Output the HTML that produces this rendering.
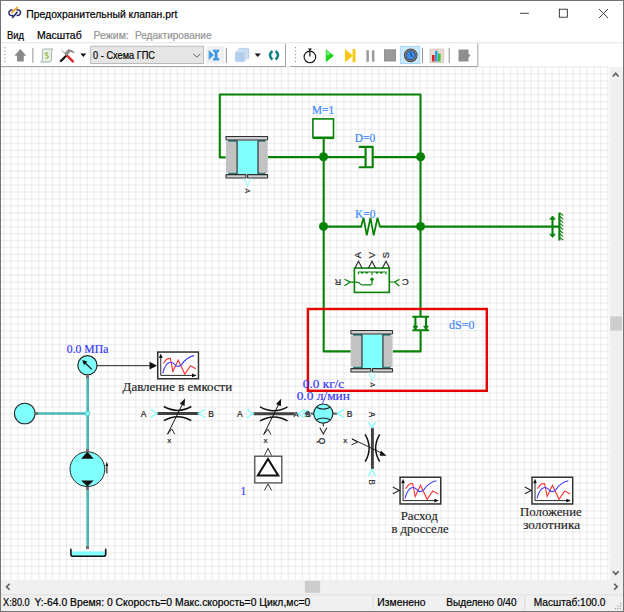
<!DOCTYPE html>
<html><head><meta charset="utf-8"><style>
html,body{margin:0;padding:0;background:#fff;}
body{width:624px;height:612px;overflow:hidden;}
svg{display:block;}

</style></head><body>
<svg width="624" height="612" viewBox="0 0 624 612">
<rect x="0" y="0" width="624" height="612" fill="#ffffff"/>
<g stroke="#000" stroke-opacity="0.055" stroke-width="1.5">
<line x1="3.95" y1="67" x2="3.95" y2="580.5"/>
<line x1="10.89" y1="67" x2="10.89" y2="580.5"/>
<line x1="17.83" y1="67" x2="17.83" y2="580.5"/>
<line x1="24.77" y1="67" x2="24.77" y2="580.5"/>
<line x1="31.71" y1="67" x2="31.71" y2="580.5"/>
<line x1="38.64" y1="67" x2="38.64" y2="580.5"/>
<line x1="45.58" y1="67" x2="45.58" y2="580.5"/>
<line x1="52.52" y1="67" x2="52.52" y2="580.5"/>
<line x1="59.46" y1="67" x2="59.46" y2="580.5"/>
<line x1="66.40" y1="67" x2="66.40" y2="580.5"/>
<line x1="73.34" y1="67" x2="73.34" y2="580.5"/>
<line x1="80.28" y1="67" x2="80.28" y2="580.5"/>
<line x1="87.22" y1="67" x2="87.22" y2="580.5"/>
<line x1="94.16" y1="67" x2="94.16" y2="580.5"/>
<line x1="101.10" y1="67" x2="101.10" y2="580.5"/>
<line x1="108.03" y1="67" x2="108.03" y2="580.5"/>
<line x1="114.97" y1="67" x2="114.97" y2="580.5"/>
<line x1="121.91" y1="67" x2="121.91" y2="580.5"/>
<line x1="128.85" y1="67" x2="128.85" y2="580.5"/>
<line x1="135.79" y1="67" x2="135.79" y2="580.5"/>
<line x1="142.73" y1="67" x2="142.73" y2="580.5"/>
<line x1="149.67" y1="67" x2="149.67" y2="580.5"/>
<line x1="156.61" y1="67" x2="156.61" y2="580.5"/>
<line x1="163.55" y1="67" x2="163.55" y2="580.5"/>
<line x1="170.49" y1="67" x2="170.49" y2="580.5"/>
<line x1="177.42" y1="67" x2="177.42" y2="580.5"/>
<line x1="184.36" y1="67" x2="184.36" y2="580.5"/>
<line x1="191.30" y1="67" x2="191.30" y2="580.5"/>
<line x1="198.24" y1="67" x2="198.24" y2="580.5"/>
<line x1="205.18" y1="67" x2="205.18" y2="580.5"/>
<line x1="212.12" y1="67" x2="212.12" y2="580.5"/>
<line x1="219.06" y1="67" x2="219.06" y2="580.5"/>
<line x1="226.00" y1="67" x2="226.00" y2="580.5"/>
<line x1="232.94" y1="67" x2="232.94" y2="580.5"/>
<line x1="239.88" y1="67" x2="239.88" y2="580.5"/>
<line x1="246.81" y1="67" x2="246.81" y2="580.5"/>
<line x1="253.75" y1="67" x2="253.75" y2="580.5"/>
<line x1="260.69" y1="67" x2="260.69" y2="580.5"/>
<line x1="267.63" y1="67" x2="267.63" y2="580.5"/>
<line x1="274.57" y1="67" x2="274.57" y2="580.5"/>
<line x1="281.51" y1="67" x2="281.51" y2="580.5"/>
<line x1="288.45" y1="67" x2="288.45" y2="580.5"/>
<line x1="295.39" y1="67" x2="295.39" y2="580.5"/>
<line x1="302.33" y1="67" x2="302.33" y2="580.5"/>
<line x1="309.27" y1="67" x2="309.27" y2="580.5"/>
<line x1="316.20" y1="67" x2="316.20" y2="580.5"/>
<line x1="323.14" y1="67" x2="323.14" y2="580.5"/>
<line x1="330.08" y1="67" x2="330.08" y2="580.5"/>
<line x1="337.02" y1="67" x2="337.02" y2="580.5"/>
<line x1="343.96" y1="67" x2="343.96" y2="580.5"/>
<line x1="350.90" y1="67" x2="350.90" y2="580.5"/>
<line x1="357.84" y1="67" x2="357.84" y2="580.5"/>
<line x1="364.78" y1="67" x2="364.78" y2="580.5"/>
<line x1="371.72" y1="67" x2="371.72" y2="580.5"/>
<line x1="378.66" y1="67" x2="378.66" y2="580.5"/>
<line x1="385.60" y1="67" x2="385.60" y2="580.5"/>
<line x1="392.53" y1="67" x2="392.53" y2="580.5"/>
<line x1="399.47" y1="67" x2="399.47" y2="580.5"/>
<line x1="406.41" y1="67" x2="406.41" y2="580.5"/>
<line x1="413.35" y1="67" x2="413.35" y2="580.5"/>
<line x1="420.29" y1="67" x2="420.29" y2="580.5"/>
<line x1="427.23" y1="67" x2="427.23" y2="580.5"/>
<line x1="434.17" y1="67" x2="434.17" y2="580.5"/>
<line x1="441.11" y1="67" x2="441.11" y2="580.5"/>
<line x1="448.05" y1="67" x2="448.05" y2="580.5"/>
<line x1="454.99" y1="67" x2="454.99" y2="580.5"/>
<line x1="461.92" y1="67" x2="461.92" y2="580.5"/>
<line x1="468.86" y1="67" x2="468.86" y2="580.5"/>
<line x1="475.80" y1="67" x2="475.80" y2="580.5"/>
<line x1="482.74" y1="67" x2="482.74" y2="580.5"/>
<line x1="489.68" y1="67" x2="489.68" y2="580.5"/>
<line x1="496.62" y1="67" x2="496.62" y2="580.5"/>
<line x1="503.56" y1="67" x2="503.56" y2="580.5"/>
<line x1="510.50" y1="67" x2="510.50" y2="580.5"/>
<line x1="517.44" y1="67" x2="517.44" y2="580.5"/>
<line x1="524.38" y1="67" x2="524.38" y2="580.5"/>
<line x1="531.31" y1="67" x2="531.31" y2="580.5"/>
<line x1="538.25" y1="67" x2="538.25" y2="580.5"/>
<line x1="545.19" y1="67" x2="545.19" y2="580.5"/>
<line x1="552.13" y1="67" x2="552.13" y2="580.5"/>
<line x1="559.07" y1="67" x2="559.07" y2="580.5"/>
<line x1="566.01" y1="67" x2="566.01" y2="580.5"/>
<line x1="572.95" y1="67" x2="572.95" y2="580.5"/>
<line x1="579.89" y1="67" x2="579.89" y2="580.5"/>
<line x1="586.83" y1="67" x2="586.83" y2="580.5"/>
<line x1="593.77" y1="67" x2="593.77" y2="580.5"/>
<line x1="600.70" y1="67" x2="600.70" y2="580.5"/>
<line x1="607.64" y1="67" x2="607.64" y2="580.5"/>
<line x1="1" y1="67.11" x2="609" y2="67.11"/>
<line x1="1" y1="74.05" x2="609" y2="74.05"/>
<line x1="1" y1="80.99" x2="609" y2="80.99"/>
<line x1="1" y1="87.92" x2="609" y2="87.92"/>
<line x1="1" y1="94.86" x2="609" y2="94.86"/>
<line x1="1" y1="101.79" x2="609" y2="101.79"/>
<line x1="1" y1="108.73" x2="609" y2="108.73"/>
<line x1="1" y1="115.67" x2="609" y2="115.67"/>
<line x1="1" y1="122.60" x2="609" y2="122.60"/>
<line x1="1" y1="129.54" x2="609" y2="129.54"/>
<line x1="1" y1="136.47" x2="609" y2="136.47"/>
<line x1="1" y1="143.41" x2="609" y2="143.41"/>
<line x1="1" y1="150.35" x2="609" y2="150.35"/>
<line x1="1" y1="157.28" x2="609" y2="157.28"/>
<line x1="1" y1="164.22" x2="609" y2="164.22"/>
<line x1="1" y1="171.15" x2="609" y2="171.15"/>
<line x1="1" y1="178.09" x2="609" y2="178.09"/>
<line x1="1" y1="185.03" x2="609" y2="185.03"/>
<line x1="1" y1="191.96" x2="609" y2="191.96"/>
<line x1="1" y1="198.90" x2="609" y2="198.90"/>
<line x1="1" y1="205.83" x2="609" y2="205.83"/>
<line x1="1" y1="212.77" x2="609" y2="212.77"/>
<line x1="1" y1="219.71" x2="609" y2="219.71"/>
<line x1="1" y1="226.64" x2="609" y2="226.64"/>
<line x1="1" y1="233.58" x2="609" y2="233.58"/>
<line x1="1" y1="240.51" x2="609" y2="240.51"/>
<line x1="1" y1="247.45" x2="609" y2="247.45"/>
<line x1="1" y1="254.39" x2="609" y2="254.39"/>
<line x1="1" y1="261.32" x2="609" y2="261.32"/>
<line x1="1" y1="268.26" x2="609" y2="268.26"/>
<line x1="1" y1="275.19" x2="609" y2="275.19"/>
<line x1="1" y1="282.13" x2="609" y2="282.13"/>
<line x1="1" y1="289.07" x2="609" y2="289.07"/>
<line x1="1" y1="296.00" x2="609" y2="296.00"/>
<line x1="1" y1="302.94" x2="609" y2="302.94"/>
<line x1="1" y1="309.87" x2="609" y2="309.87"/>
<line x1="1" y1="316.81" x2="609" y2="316.81"/>
<line x1="1" y1="323.75" x2="609" y2="323.75"/>
<line x1="1" y1="330.68" x2="609" y2="330.68"/>
<line x1="1" y1="337.62" x2="609" y2="337.62"/>
<line x1="1" y1="344.55" x2="609" y2="344.55"/>
<line x1="1" y1="351.49" x2="609" y2="351.49"/>
<line x1="1" y1="358.43" x2="609" y2="358.43"/>
<line x1="1" y1="365.36" x2="609" y2="365.36"/>
<line x1="1" y1="372.30" x2="609" y2="372.30"/>
<line x1="1" y1="379.23" x2="609" y2="379.23"/>
<line x1="1" y1="386.17" x2="609" y2="386.17"/>
<line x1="1" y1="393.11" x2="609" y2="393.11"/>
<line x1="1" y1="400.04" x2="609" y2="400.04"/>
<line x1="1" y1="406.98" x2="609" y2="406.98"/>
<line x1="1" y1="413.91" x2="609" y2="413.91"/>
<line x1="1" y1="420.85" x2="609" y2="420.85"/>
<line x1="1" y1="427.79" x2="609" y2="427.79"/>
<line x1="1" y1="434.72" x2="609" y2="434.72"/>
<line x1="1" y1="441.66" x2="609" y2="441.66"/>
<line x1="1" y1="448.59" x2="609" y2="448.59"/>
<line x1="1" y1="455.53" x2="609" y2="455.53"/>
<line x1="1" y1="462.47" x2="609" y2="462.47"/>
<line x1="1" y1="469.40" x2="609" y2="469.40"/>
<line x1="1" y1="476.34" x2="609" y2="476.34"/>
<line x1="1" y1="483.27" x2="609" y2="483.27"/>
<line x1="1" y1="490.21" x2="609" y2="490.21"/>
<line x1="1" y1="497.15" x2="609" y2="497.15"/>
<line x1="1" y1="504.08" x2="609" y2="504.08"/>
<line x1="1" y1="511.02" x2="609" y2="511.02"/>
<line x1="1" y1="517.95" x2="609" y2="517.95"/>
<line x1="1" y1="524.89" x2="609" y2="524.89"/>
<line x1="1" y1="531.83" x2="609" y2="531.83"/>
<line x1="1" y1="538.76" x2="609" y2="538.76"/>
<line x1="1" y1="545.70" x2="609" y2="545.70"/>
<line x1="1" y1="552.63" x2="609" y2="552.63"/>
<line x1="1" y1="559.57" x2="609" y2="559.57"/>
<line x1="1" y1="566.51" x2="609" y2="566.51"/>
<line x1="1" y1="573.44" x2="609" y2="573.44"/>
<line x1="1" y1="580.38" x2="609" y2="580.38"/>
</g>
<g fill="none" stroke="#2c2870" stroke-width="1.5"><path d="M12.6 10.2 A2.8 2.8 0 1 0 13.2 15.2"/><path d="M16.6 15.2 A2.8 2.8 0 1 0 16.4 10.2"/><path d="M12.3 18 L17.5 11.8" stroke-width="1.7"/></g>
<path d="M11.8 12.6 L17.2 7.5" stroke="#f5a623" stroke-width="1.9" stroke-linecap="round"/>
<text x="26.3" y="17.6" font-size="10.7" fill="#000" stroke="#000" stroke-width="0.2" font-family='"Liberation Sans", sans-serif' text-anchor="start" textLength="151" lengthAdjust="spacingAndGlyphs" >Предохранительный клапан.prt</text>
<line x1="520" y1="13.3" x2="528.8" y2="13.3" stroke="#111" stroke-width="0.8"/>
<rect x="559.3" y="9.2" width="8" height="8" fill="none" stroke="#111" stroke-width="0.8"/>
<path d="M599 9 L608 18 M608 9 L599 18" stroke="#111" stroke-width="0.8"/>
<text x="7" y="38.5" font-size="10.0" fill="#000" stroke="#000" stroke-width="0.2" font-family='"Liberation Sans", sans-serif' text-anchor="start" textLength="17" lengthAdjust="spacingAndGlyphs" >Вид</text>
<text x="36.9" y="38.5" font-size="10.2" fill="#000" stroke="#000" stroke-width="0.2" font-family='"Liberation Sans", sans-serif' text-anchor="start" textLength="44.8" lengthAdjust="spacingAndGlyphs" >Масштаб</text>
<text x="93.6" y="38.5" font-size="10.2" fill="#959595" stroke="#959595" stroke-width="0.2" font-family='"Liberation Sans", sans-serif' text-anchor="start" textLength="35.2" lengthAdjust="spacingAndGlyphs" >Режим:</text>
<text x="135" y="38.5" font-size="10.2" fill="#959595" stroke="#959595" stroke-width="0.2" font-family='"Liberation Sans", sans-serif' text-anchor="start" textLength="76.5" lengthAdjust="spacingAndGlyphs" >Редактирование</text>
<line x1="1" y1="42.8" x2="623" y2="42.8" stroke="#e3e3e3" stroke-width="1"/>
<path d="M285.5 43.5 V66.5 H1" fill="none" stroke="#a3a3a3" stroke-width="1"/>
<path d="M477.8 43.5 V66.5 H290" fill="none" stroke="#a3a3a3" stroke-width="1"/>
<rect x="609.6" y="67" width="13.4" height="513.5" fill="#f0f0f0"/>
<rect x="1" y="580.5" width="622" height="13.8" fill="#f0f0f0"/>
<rect x="610.2" y="316.3" width="11.8" height="14.4" fill="#cdcdcd"/>
<rect x="304.9" y="580.9" width="15.2" height="11.9" fill="#cdcdcd"/>
<g fill="none" stroke="#5a5a5a" stroke-width="1.6"><path d="M612.8 76.5 L615.7 73.2 L618.6 76.5"/><path d="M612.8 571.2 L615.7 574.4 L618.6 571.2"/><path d="M9.6 583.7 L6.6 586.7 L9.6 589.7"/><path d="M614.2 583.7 L617.2 586.7 L614.2 589.7"/></g>
<rect x="1" y="594.3" width="622" height="17" fill="#f0f0f0"/>
<line x1="1" y1="594.8" x2="623" y2="594.8" stroke="#d9d9d9" stroke-width="0.8"/>
<line x1="373.1" y1="596" x2="373.1" y2="610" stroke="#d5d5d5" stroke-width="0.8"/>
<line x1="524.8" y1="596" x2="524.8" y2="610" stroke="#d5d5d5" stroke-width="0.8"/>
<text x="3.1" y="606.3" font-size="10.2" fill="#000" stroke="#000" stroke-width="0.2" font-family='"Liberation Sans", sans-serif' text-anchor="start" textLength="26.6" lengthAdjust="spacingAndGlyphs" >X:80.0</text>
<text x="34.4" y="606.3" font-size="10.2" fill="#000" stroke="#000" stroke-width="0.2" font-family='"Liberation Sans", sans-serif' text-anchor="start" textLength="276" lengthAdjust="spacingAndGlyphs" >Y:-64.0 Время: 0 Скорость=0 Макс.скорость=0 Цикл,мс=0</text>
<text x="377.3" y="606.3" font-size="10.2" fill="#000" stroke="#000" stroke-width="0.2" font-family='"Liberation Sans", sans-serif' text-anchor="start" textLength="48.1" lengthAdjust="spacingAndGlyphs" >Изменено</text>
<text x="446.3" y="606.3" font-size="10.2" fill="#000" stroke="#000" stroke-width="0.2" font-family='"Liberation Sans", sans-serif' text-anchor="start" textLength="70.2" lengthAdjust="spacingAndGlyphs" >Выделено 0/40</text>
<text x="533.8" y="606.3" font-size="10.2" fill="#000" stroke="#000" stroke-width="0.2" font-family='"Liberation Sans", sans-serif' text-anchor="start" textLength="71.7" lengthAdjust="spacingAndGlyphs" >Масштаб:100.0</text>
<rect x="619.9" y="602.9" width="1.2" height="1.2" fill="#a0a0a0"/>
<rect x="617.4" y="605.4" width="1.2" height="1.2" fill="#a0a0a0"/>
<rect x="619.9" y="605.4" width="1.2" height="1.2" fill="#a0a0a0"/>
<rect x="614.9" y="607.9" width="1.2" height="1.2" fill="#a0a0a0"/>
<rect x="617.4" y="607.9" width="1.2" height="1.2" fill="#a0a0a0"/>
<rect x="619.9" y="607.9" width="1.2" height="1.2" fill="#a0a0a0"/>
<rect x="0.5" y="0.5" width="623" height="611" fill="none" stroke="#747474" stroke-width="1"/>
<rect x="4.2" y="47.0" width="1.2" height="1.2" fill="#9a9a9a"/>
<rect x="4.2" y="50.45" width="1.2" height="1.2" fill="#9a9a9a"/>
<rect x="4.2" y="53.9" width="1.2" height="1.2" fill="#9a9a9a"/>
<rect x="4.2" y="57.35" width="1.2" height="1.2" fill="#9a9a9a"/>
<rect x="4.2" y="60.800000000000004" width="1.2" height="1.2" fill="#9a9a9a"/>
<rect x="294.9" y="47.0" width="1.2" height="1.2" fill="#9a9a9a"/>
<rect x="294.9" y="50.45" width="1.2" height="1.2" fill="#9a9a9a"/>
<rect x="294.9" y="53.9" width="1.2" height="1.2" fill="#9a9a9a"/>
<rect x="294.9" y="57.35" width="1.2" height="1.2" fill="#9a9a9a"/>
<rect x="294.9" y="60.800000000000004" width="1.2" height="1.2" fill="#9a9a9a"/>
<path d="M20.4 48.9 L26.3 55.7 L23.8 55.7 L23.8 61.5 L17 61.5 L17 55.7 L14.4 55.7 Z" fill="#8a8a8a"/>
<line x1="32.9" y1="47.8" x2="32.9" y2="62.9" stroke="#6e6e6e" stroke-width="0.75"/>
<line x1="226.4" y1="47.8" x2="226.4" y2="62.9" stroke="#6e6e6e" stroke-width="0.75"/>
<line x1="422.5" y1="47.8" x2="422.5" y2="62.9" stroke="#6e6e6e" stroke-width="0.75"/>
<line x1="449.2" y1="47.8" x2="449.2" y2="62.9" stroke="#6e6e6e" stroke-width="0.75"/>
<path d="M43 49 H53 Q51.6 50 51.6 51.5 V59.8 Q51.4 61.8 49.3 62 H40.6 Q42.4 61 42.4 59.4 V50.6 Q42.4 49.2 43 49 Z" fill="#e9f1e4" stroke="#8aa3a3" stroke-width="0.8"/>
<path d="M48.2 53.2 Q46.2 52.4 45.6 53.8 Q45.4 55 47 55.5 Q48.6 56 48.3 57.3 Q47.6 58.6 45.4 57.8" fill="none" stroke="#8cb02c" stroke-width="1.1"/>
<path d="M61.6 50.2 L67 55.4" stroke="#9a9a9a" stroke-width="1"/>
<path d="M60.9 61 L66.2 55.8" stroke="#111" stroke-width="2.3" stroke-linecap="round"/>
<path d="M67 55.6 L72.9 61.3" stroke="#e0242c" stroke-width="2.5" stroke-linecap="round"/>
<path d="M64.3 53.2 L68.2 49.3 Q71.5 49 74.8 52.3 L73.8 53.3 Q71.5 51.8 70.3 52.1 L66.2 56.1 Z" fill="#8e8e8e"/>
<path d="M80.3 53.6 L86.3 53.6 L83.3 56.9 Z" fill="#111"/>
<path d="M254.7 53.6 L260.7 53.6 L257.7 56.9 Z" fill="#111"/>
<rect x="90.7" y="46.2" width="113" height="17.3" fill="#e5e5e5" stroke="#adadad" stroke-width="0.8"/>
<text x="93.1" y="59.0" font-size="10.2" fill="#000" stroke="#000" stroke-width="0.2" font-family='"Liberation Sans", sans-serif' text-anchor="start" textLength="61.8" lengthAdjust="spacingAndGlyphs" >0 - Схема ГПС</text>
<path d="M193.4 53.8 L196.9 57.3 L200.4 53.8" fill="none" stroke="#444" stroke-width="0.85"/>
<rect x="206.3" y="46" width="18.1" height="17.7" fill="#f0f0f0"/>
<path d="M208.7 50 L213.9 55 L208.7 59.9 Z" fill="#3f9fe4"/>
<path d="M216.1 51 V59.2" stroke="#3a98e0" stroke-width="2.8"/>
<g fill="#3a98e0"><circle cx="214.5" cy="50.7" r="1.5"/><circle cx="217.7" cy="50.7" r="1.5"/><circle cx="214.5" cy="59.3" r="1.5"/><circle cx="217.7" cy="59.3" r="1.5"/></g>
<rect x="238.6" y="48.4" width="10.2" height="10.2" rx="1.2" fill="#c6daf0" stroke="#9dbde2" stroke-width="0.6"/>
<rect x="236.7" y="50" width="10.2" height="10.2" rx="1.2" fill="#bcd4ee" stroke="#e6eef8" stroke-width="0.6"/>
<rect x="234.9" y="51.8" width="10.2" height="10.2" rx="1.2" fill="#b2cdea" stroke="#eef4fb" stroke-width="0.6"/>
<path d="M272.4 51 Q267.6 55.2 272.4 59.4" fill="none" stroke="#138585" stroke-width="2.6"/>
<path d="M275.6 51 Q280.4 55.2 275.6 59.4" fill="none" stroke="#138585" stroke-width="2.6"/>
<circle cx="309.9" cy="56.9" r="5.8" fill="none" stroke="#111" stroke-width="1.1"/>
<path d="M307.8 48.5 H312 L310.6 50 V51.2 H309.2 V50 Z" fill="#111"/>
<path d="M309.9 52 V56.6" stroke="#111" stroke-width="1.2"/>
<path d="M325.8 49.2 L334 55.7 L325.8 62.2 Z" fill="#1ed81e"/>
<path d="M326.6 50.8 L330.5 53.9 L326.6 55.5 Z" fill="#7cf07c"/>
<path d="M345 49.1 L352.9 55.7 L345 62.2 Z" fill="#fcc60c"/>
<rect x="352.6" y="49.1" width="2.8" height="13.1" fill="#fcc60c"/>
<path d="M366.3 50.5 L368.8 50 L369 61.5 L366.5 62 Z M371.8 50.5 L374.3 50 L374.5 61.5 L372 62 Z" fill="#9a9a9a"/>
<rect x="384.4" y="49.8" width="11.2" height="11.2" fill="#9a9a9a" stroke="#858585" stroke-width="0.8"/>
<rect x="400.3" y="46.3" width="19.6" height="17.2" fill="#cce8ff" stroke="#99d1ff" stroke-width="0.8"/>
<circle cx="410.7" cy="55.3" r="6.3" fill="#9a9a9a" stroke="#4a4a4a" stroke-width="1.1"/>
<circle cx="410.7" cy="55.3" r="4.6" fill="#3a8cf0" stroke="#333" stroke-width="0.8"/>
<path d="M410.6 52.4 Q410.6 55.4 412.2 56.8" fill="none" stroke="#1a2a50" stroke-width="0.9"/>
<rect x="430" y="49" width="13.8" height="13.6" fill="#eadbd0" stroke="#c8b8a8" stroke-width="0.6"/>
<rect x="432" y="55" width="2.6" height="6.5" fill="#e02020"/>
<rect x="435" y="50.8" width="2.6" height="10.7" fill="#2aa0e0"/>
<rect x="438" y="53.5" width="2.6" height="8" fill="#40c040"/>
<path d="M458.5 49.5 H468.5 V53.5 L470.5 55.5 L468.5 57.5 V61.5 H458.5 Z" fill="#8e8e8e"/>
<g fill="none" stroke="#078207" stroke-width="2.1" stroke-linejoin="round">
<path d="M225.6 157.4 H219.8 V94.5 H420.5 V316.8"/>
<path d="M420.6 330.5 V351.4 H392.8"/>
<path d="M268 157.1 H365.6 M372.7 157.1 H420.5"/>
<path d="M323.7 138.4 V351.4 H350.6"/>
<path d="M323.6 226.6 H362 M379.4 226.6 H559.4"/>
<path d="M361.2 226.6 L363.6 217.8 L366.8 235.4 L370.5 217.8 L373.7 235.4 L377.5 217.8 L379.9 226.6" stroke-width="1.75" stroke-linejoin="miter"/>
<path d="M358.8 146.9 H372.7 V167.3 H358.8 M365.6 146.9 V167.3"/>
<path d="M412.3 316.8 H429.1 M412.3 330.3 H429.1 M415.4 317 V328.5 M426 317 V328.5"/>
<path d="M559.4 212.7 V240.4 M552.5 218 V235.5"/>
</g>
<path d="M412.9 326 L415.4 330.2 L417.9 326 Z M423.5 326 L426 330.2 L428.5 326 Z" fill="#078207" stroke="#078207" stroke-width="0.6"/>
<path d="M549.8 219.2 L552.5 216 L555.2 219.2 Z M549.8 234.2 L552.5 237.4 L555.2 234.2 Z" fill="#078207" stroke="#078207" stroke-width="0.8"/>
<path d="M559.4 212.60 L563.2 215.60 M559.4 216.10 L563.2 219.10 M559.4 219.60 L563.2 222.60 M559.4 223.10 L563.2 226.10 M559.4 226.60 L563.2 229.60 M559.4 230.10 L563.2 233.10 M559.4 233.60 L563.2 236.60 M559.4 237.10 L563.2 240.10 " stroke="#078207" stroke-width="1.2"/>
<rect x="312.9" y="118.9" width="20.6" height="18.6" fill="#fff" stroke="#078207" stroke-width="1.6"/>
<line x1="312.9" y1="137.9" x2="333.9" y2="137.9" stroke="#078207" stroke-width="2.4"/>
<circle cx="323.5" cy="156.7" r="4.5" fill="#078207"/>
<circle cx="420.6" cy="156.7" r="4.5" fill="#078207"/>
<circle cx="323.5" cy="226.4" r="4.5" fill="#078207"/>
<circle cx="420.6" cy="226.4" r="4.5" fill="#078207"/>
<rect x="354.4" y="268.1" width="34.9" height="24.3" fill="#fff" stroke="#078207" stroke-width="1.6"/>
<path d="M358.4 274.6 V272 H386 V274.4 M361 272 Q362.2 274.6 363.4 272 M365.4 272 Q366.6 274.6 367.8 272 M372 272 V275.5 M375.8 272 Q377 274.6 378.2 272 M380 272 Q381.2 274.6 382.4 272" fill="none" stroke="#078207" stroke-width="1.1"/>
<path d="M344.5 279.3 L350.4 282.1 L344.5 285.8 M350.4 282.1 H357 Q359 282.1 360.8 284.4 Q361.3 284.9 362.5 284.9 H370.5 Q372 284.9 372 283.4 V279" fill="none" stroke="#078207" stroke-width="1.2"/>
<circle cx="372" cy="279.2" r="1.7" fill="#078207"/>
<path d="M399.4 279.4 L394.6 282 L399.4 286 M389.3 282 H394.6" fill="none" stroke="#078207" stroke-width="1.2"/>
<path d="M355.0 268 L358.5 261.2 L362.0 268" fill="none" stroke="#2a2a2a" stroke-width="1.1"/>
<path d="M368.5 268 L372.0 261.2 L375.5 268" fill="none" stroke="#2a2a2a" stroke-width="1.1"/>
<path d="M382.5 268 L386.0 261.2 L389.5 268" fill="none" stroke="#2a2a2a" stroke-width="1.1"/>
<text x="358.5" y="255.2" font-size="9.3" fill="#2a2a2a" stroke="#2a2a2a" stroke-width="0.2" font-family='"Liberation Sans"' text-anchor="middle" dominant-baseline="central" transform="rotate(-90 358.5 255.2)">A</text>
<text x="372.0" y="255.2" font-size="9.3" fill="#2a2a2a" stroke="#2a2a2a" stroke-width="0.2" font-family='"Liberation Sans"' text-anchor="middle" dominant-baseline="central" transform="rotate(-90 372.0 255.2)">V</text>
<text x="386.0" y="255.2" font-size="9.3" fill="#2a2a2a" stroke="#2a2a2a" stroke-width="0.2" font-family='"Liberation Sans"' text-anchor="middle" dominant-baseline="central" transform="rotate(-90 386.0 255.2)">S</text>
<text x="338" y="281.6" font-size="9.3" fill="#2a2a2a" stroke="#2a2a2a" stroke-width="0.2" font-family='"Liberation Sans"' text-anchor="middle" dominant-baseline="central" transform="rotate(180 338 281.6)">R</text>
<text x="405.3" y="281.6" font-size="9.3" fill="#2a2a2a" stroke="#2a2a2a" stroke-width="0.2" font-family='"Liberation Sans"' text-anchor="middle" dominant-baseline="central" transform="rotate(180 405.3 281.6)">C</text>
<g transform="translate(225.6,136.1)"><rect x="11.5" y="4.4" width="20.9" height="33.6" fill="#80ffff"/><rect x="0.4" y="5.4" width="11.1" height="31.4" fill="#c2c2c2"/><rect x="32.4" y="5.4" width="9.6" height="31.4" fill="#c2c2c2"/><path d="M2.5 3.8 H11.5 V5.6 H2.5 Z M32.4 3.8 H40 V5.6 H32.4 Z M2.5 36.6 H11.5 V38.4 H2.5 Z M32.4 36.6 H40 V38.4 H32.4 Z" fill="#2d7d7d"/><path d="M11.5 4.4 V37.6 M32.4 4.4 V37.6" stroke="#262626" stroke-width="1.1"/><rect x="0.4" y="0.4" width="41.6" height="3.4" rx="0.3" fill="#d0d0d0" stroke="#2e2e2e" stroke-width="1.05"/><rect x="0.4" y="38.5" width="20" height="3.4" rx="0.3" fill="#d0d0d0" stroke="#2e2e2e" stroke-width="1.05"/><rect x="22" y="38.5" width="20" height="3.4" rx="0.3" fill="#d0d0d0" stroke="#2e2e2e" stroke-width="1.05"/><path d="M18.3 42.2 L21.8 50.4 L25.3 42.2" fill="none" stroke="#80ffff" stroke-width="0.9"/><text x="21.6" y="54.6" font-size="7.5" fill="#222" font-family='"Liberation Sans"' text-anchor="middle" dominant-baseline="central" transform="rotate(90 21.6 54.6)">A</text></g>
<g transform="translate(350.5,330.1)"><rect x="11.5" y="4.4" width="20.9" height="33.6" fill="#80ffff"/><rect x="0.4" y="5.4" width="11.1" height="31.4" fill="#c2c2c2"/><rect x="32.4" y="5.4" width="9.6" height="31.4" fill="#c2c2c2"/><path d="M2.5 3.8 H11.5 V5.6 H2.5 Z M32.4 3.8 H40 V5.6 H32.4 Z M2.5 36.6 H11.5 V38.4 H2.5 Z M32.4 36.6 H40 V38.4 H32.4 Z" fill="#2d7d7d"/><path d="M11.5 4.4 V37.6 M32.4 4.4 V37.6" stroke="#262626" stroke-width="1.1"/><rect x="0.4" y="0.4" width="41.6" height="3.4" rx="0.3" fill="#d0d0d0" stroke="#2e2e2e" stroke-width="1.05"/><rect x="0.4" y="38.5" width="20" height="3.4" rx="0.3" fill="#d0d0d0" stroke="#2e2e2e" stroke-width="1.05"/><rect x="22" y="38.5" width="20" height="3.4" rx="0.3" fill="#d0d0d0" stroke="#2e2e2e" stroke-width="1.05"/><path d="M18.3 42.2 L21.8 50.4 L25.3 42.2" fill="none" stroke="#80ffff" stroke-width="0.9"/><text x="21.6" y="54.6" font-size="7.5" fill="#222" font-family='"Liberation Sans"' text-anchor="middle" dominant-baseline="central" transform="rotate(90 21.6 54.6)">A</text></g>
<text x="323.1" y="114.2" font-size="12.4" fill="#3b87ff" stroke="#3b87ff" stroke-width="0.18" font-family='"Liberation Serif", serif' text-anchor="middle" textLength="22" lengthAdjust="spacingAndGlyphs" >M=1</text>
<text x="365.0" y="141.7" font-size="12.4" fill="#3b87ff" stroke="#3b87ff" stroke-width="0.18" font-family='"Liberation Serif", serif' text-anchor="middle" textLength="20.4" lengthAdjust="spacingAndGlyphs" >D=0</text>
<text x="365.3" y="218.0" font-size="12.4" fill="#3b87ff" stroke="#3b87ff" stroke-width="0.18" font-family='"Liberation Serif", serif' text-anchor="middle" textLength="20.5" lengthAdjust="spacingAndGlyphs" >K=0</text>
<text x="461.8" y="329.2" font-size="12.4" fill="#3b87ff" stroke="#3b87ff" stroke-width="0.18" font-family='"Liberation Serif", serif' text-anchor="middle" textLength="25.5" lengthAdjust="spacingAndGlyphs" >dS=0</text>
<rect x="307.9" y="309" width="178.9" height="81.8" fill="none" stroke="#e60000" stroke-width="2.4"/>
<g fill="none" stroke="#4db7b7" stroke-width="2.6">
<path d="M37 413.5 H87.7 M87.7 378 V547.5"/>
</g>
<circle cx="87.45" cy="365.3" r="9.6" fill="#80ffff" stroke="#2a2a2a" stroke-width="1.2"/>
<path d="M91.8 369.4 L84.5 362.2" stroke="#111" stroke-width="1.2"/>
<path d="M82.3 360 L87.4 361.5 L83.8 365.1 Z" fill="#111"/>
<rect x="86" y="375.3" width="3" height="3" fill="#707070"/>
<path d="M97 365.7 H151" stroke="#222" stroke-width="1"/>
<path d="M157 365.7 L149.5 361.8 L149.5 369.6 Z" fill="#111"/>
<text x="87.6" y="352.5" font-size="11.7" fill="#3434ff" stroke="#3434ff" stroke-width="0.16" font-family='"Liberation Serif", serif' text-anchor="middle" textLength="41.6" lengthAdjust="spacingAndGlyphs" >0.0 МПа</text>
<g transform="translate(157,351.3)"><rect x="0.75" y="0.75" width="40.7" height="26.7" fill="#fff" stroke="#333" stroke-width="1.5"/><polyline points="6.2,12.2 9.7,7.8 13.3,6.9 15.9,20.1 21.2,8.7 27.8,22.8 33.5,14.4 38.8,17.5" fill="none" stroke="#ff3030" stroke-width="1.1"/><path d="M5.8 22 Q8 12 13.3 11 Q16 10.9 18.6 14 Q21.5 16.5 24.7 13.1 Q30 5.5 37.1 4.3" fill="none" stroke="#3a3aff" stroke-width="1.1"/><path d="M3.75 24.1 V4.5 M3.75 24.1 H37" fill="none" stroke="#111" stroke-width="0.9"/><path d="M3.75 2.3 L1.9 6.8 L5.6 6.8 Z M39.6 24.1 L35 22.2 L35 26 Z" fill="#111"/></g>
<text x="177.4" y="391.2" font-size="12.2" fill="#222" stroke="#222" stroke-width="0.16" font-family='"Liberation Serif", serif' text-anchor="middle" textLength="109.6" lengthAdjust="spacingAndGlyphs" >Давление в емкости</text>
<circle cx="24.7" cy="413.5" r="10.3" fill="#80ffff" stroke="#2a2a2a" stroke-width="1.1"/>
<rect x="35" y="412" width="3" height="3" fill="#707070"/>
<circle cx="87.5" cy="413.5" r="2.4" fill="#80ffff" stroke="#4db7b7" stroke-width="0.8"/>
<circle cx="87.4" cy="469.2" r="17.4" fill="#80ffff" stroke="#2a2a2a" stroke-width="1"/>
<path d="M87.4 451.7 L93.7 458.7 L81.1 458.7 Z M81.1 480.4 L93.7 480.4 L87.4 486.6 Z" fill="#111"/>
<rect x="86" y="449" width="3" height="2.5" fill="#707070"/>
<rect x="86" y="487" width="3" height="3" fill="#707070"/>
<path d="M106.8 473.6 V464" stroke="#505050" stroke-width="1.5"/>
<path d="M106.8 461.8 L105.4 466 L108.2 466 Z" fill="#111"/>
<rect x="86" y="546" width="3" height="3" fill="#707070"/>
<rect x="71.2" y="551.4" width="34" height="4.6" fill="#80ffff"/>
<path d="M70.9 549.2 V554.2 Q70.9 556.2 72.9 556.2 H103.7 Q105.7 556.2 105.7 554.2 V549.2" fill="none" stroke="#111" stroke-width="1.6" stroke-linecap="round"/>
<path d="M157.4 413.5 H198.5" stroke="#404040" stroke-width="2.9"/><path d="M163.8 406.5 Q178 414.3 191.3 406.5 M163.8 420.6 Q178 412.7 191.3 420.6" fill="none" stroke="#111" stroke-width="1.45"/><path d="M167.5 434.2 L183.5 402.0" stroke="#111" stroke-width="1"/><path d="M185 398.5 L179.8 403.7 L184.6 405.9 Z" fill="#111"/><path d="M167.5 434.2 L171.8 428.9 L174.7 434.2" fill="none" stroke="#111" stroke-width="0.9"/><path d="M150.5 409.5 L157 413.5 L150.5 417.5 M205 409.5 L198.5 413.5 L205 417.5" fill="none" stroke="#80ffff" stroke-width="1.3"/>
<text x="143.7" y="417.0" font-size="8.5" fill="#222" stroke="#222" stroke-width="0.2" font-family='"Liberation Sans", sans-serif' text-anchor="middle"  >A</text>
<text x="211" y="417.0" font-size="8.5" fill="#222" stroke="#222" stroke-width="0.2" font-family='"Liberation Sans", sans-serif' text-anchor="middle"  >B</text>
<text x="169.3" y="442.5" font-size="8" fill="#222" stroke="#222" stroke-width="0.2" font-family='"Liberation Sans", sans-serif' text-anchor="middle"  >x</text>
<path d="M253.6 413.8 H294.7" stroke="#404040" stroke-width="2.9"/><path d="M260.0 406.8 Q274.2 414.6 287.5 406.8 M260.0 420.90000000000003 Q274.2 413.0 287.5 420.90000000000003" fill="none" stroke="#111" stroke-width="1.45"/><path d="M263.7 434.5 L279.7 402.3" stroke="#111" stroke-width="1"/><path d="M281.2 398.8 L276.0 404.0 L280.8 406.2 Z" fill="#111"/><path d="M263.7 434.5 L268.0 429.2 L270.9 434.5" fill="none" stroke="#111" stroke-width="0.9"/><path d="M246.7 409.8 L253.2 413.8 L246.7 417.8 M304.5 409.8 L298.0 413.8 L304.5 417.8" fill="none" stroke="#80ffff" stroke-width="1.3"/>
<text x="239.89999999999998" y="417.3" font-size="8.5" fill="#222" stroke="#222" stroke-width="0.2" font-family='"Liberation Sans", sans-serif' text-anchor="middle"  >A</text>
<text x="307.2" y="417.3" font-size="8.5" fill="#222" stroke="#222" stroke-width="0.2" font-family='"Liberation Sans", sans-serif' text-anchor="middle"  >B</text>
<text x="265.5" y="442.8" font-size="8" fill="#222" stroke="#222" stroke-width="0.2" font-family='"Liberation Sans", sans-serif' text-anchor="middle"  >x</text>
<path d="M311 413.6 H315 M332 413.6 H337.5" stroke="#6a6a6a" stroke-width="2.4"/>
<circle cx="323.3" cy="413.6" r="9.6" fill="#80ffff" stroke="#2a2a2a" stroke-width="1.2"/>
<path d="M316.3 407.3 Q323.3 411 330.3 407.3 M316.3 419.8 Q323.3 416.1 330.3 419.8" fill="none" stroke="#222" stroke-width="1.1"/>
<path d="M322.3 403.9 L324.6 398.3" stroke="#3434ff" stroke-width="0.8"/>
<path d="M323.3 423.2 V426.3 M319.8 427.8 L323.3 434 L326.8 427.8" fill="none" stroke="#222" stroke-width="1.1"/>
<path d="M307.6 409.8 L303.3 413.6 L307.6 417.4 M343.7 409.6 L337.5 413.6 L343.7 417.6" fill="none" stroke="#80ffff" stroke-width="1.3"/>
<text x="296.2" y="416.6" font-size="7.8" fill="#222" stroke="#222" stroke-width="0.2" font-family='"Liberation Sans", sans-serif' text-anchor="middle"  >A</text>
<text x="308.3" y="416.6" font-size="7.8" fill="#222" stroke="#222" stroke-width="0.2" font-family='"Liberation Sans", sans-serif' text-anchor="middle"  >B</text>
<text x="349.6" y="417.3" font-size="8.5" fill="#222" stroke="#222" stroke-width="0.2" font-family='"Liberation Sans", sans-serif' text-anchor="middle"  >B</text>
<text x="321.8" y="441" font-size="8.2" fill="#222" stroke="#222" stroke-width="0.2" font-family='"Liberation Sans"' text-anchor="middle" dominant-baseline="central" transform="rotate(90 321.8 441)">Q</text>
<text x="323.5" y="388.4" font-size="12" fill="#3434ff" stroke="#3434ff" stroke-width="0.16" font-family='"Liberation Serif", serif' text-anchor="middle" textLength="41.4" lengthAdjust="spacingAndGlyphs" >0.0 кг/с</text>
<text x="323.3" y="400.4" font-size="12" fill="#3434ff" stroke="#3434ff" stroke-width="0.16" font-family='"Liberation Serif", serif' text-anchor="middle" textLength="53.3" lengthAdjust="spacingAndGlyphs" >0.0 л/мин</text>
<path d="M372.4 427.8 V469.0" stroke="#404040" stroke-width="2.9"/>
<path d="M365.09999999999997 434.3 Q373.2 448.0 365.09999999999997 461.7 M379.7 434.3 Q371.59999999999997 448.0 379.7 461.7" fill="none" stroke="#111" stroke-width="1.45"/>
<path d="M351.9 438.8 L383.5 454" stroke="#111" stroke-width="0.9"/>
<path d="M386.5 455.7 L380.8 450.6 L379.7 455.8 Z" fill="#111"/>
<path d="M351.9 438.8 L357.5 442.2 L351.5 444.8" fill="none" stroke="#111" stroke-width="0.9"/>
<path d="M368.5 421.9 L372 427.5 L375.5 421.9 M368.5 476.3 L372 469.5 L375.5 476.3" fill="none" stroke="#80ffff" stroke-width="1.3"/>
<text x="345.3" y="442.5" font-size="8" fill="#222" stroke="#222" stroke-width="0.2" font-family='"Liberation Sans", sans-serif' text-anchor="middle"  >x</text>
<text x="371" y="414.6" font-size="8.2" stroke="#222" stroke-width="0.15" fill="#222" font-family='"Liberation Sans"' text-anchor="middle" dominant-baseline="central" transform="rotate(90 371 414.6)">A</text>
<text x="372" y="482.2" font-size="8.5" fill="#222" font-family='"Liberation Sans"' text-anchor="middle" dominant-baseline="central" transform="rotate(90 372 482.2)">B</text>
<rect x="254.8" y="456.2" width="27" height="26.7" fill="#fff" stroke="#404040" stroke-width="1.2"/>
<path d="M268 459 L278.3 475.6 L257.8 475.6 Z" fill="none" stroke="#111" stroke-width="2"/>
<path d="M264.4 455.6 L268 448.4 L271.6 455.6 M264.4 490.5 L268 483.9 L271.6 490.5" fill="none" stroke="#222" stroke-width="0.9"/>
<text x="243.3" y="494.7" font-size="11.5" fill="#3434ff" stroke="#3434ff" stroke-width="0.16" font-family='"Liberation Serif", serif' text-anchor="middle"  >1</text>
<g transform="translate(399.3,476.5)"><rect x="0.75" y="0.75" width="40.7" height="26.7" fill="#fff" stroke="#333" stroke-width="1.5"/><polyline points="6.2,12.2 9.7,7.8 13.3,6.9 15.9,20.1 21.2,8.7 27.8,22.8 33.5,14.4 38.8,17.5" fill="none" stroke="#ff3030" stroke-width="1.1"/><path d="M5.8 22 Q8 12 13.3 11 Q16 10.9 18.6 14 Q21.5 16.5 24.7 13.1 Q30 5.5 37.1 4.3" fill="none" stroke="#3a3aff" stroke-width="1.1"/><path d="M3.75 24.1 V4.5 M3.75 24.1 H37" fill="none" stroke="#111" stroke-width="0.9"/><path d="M3.75 2.3 L1.9 6.8 L5.6 6.8 Z M39.6 24.1 L35 22.2 L35 26 Z" fill="#111"/></g>
<path d="M392.8 487 L399.3 490.4 L392.8 493.7" fill="none" stroke="#222" stroke-width="1.1"/>
<text x="419.2" y="519.9" font-size="13" fill="#1e1e1e" stroke="#1e1e1e" stroke-width="0.16" font-family='"Liberation Serif", serif' text-anchor="middle" textLength="37" lengthAdjust="spacingAndGlyphs" >Расход</text>
<text x="420" y="533" font-size="13" fill="#1e1e1e" stroke="#1e1e1e" stroke-width="0.16" font-family='"Liberation Serif", serif' text-anchor="middle" textLength="57.1" lengthAdjust="spacingAndGlyphs" >в дросселе</text>
<g transform="translate(531.25,476.5)"><rect x="0.75" y="0.75" width="40.7" height="26.7" fill="#fff" stroke="#333" stroke-width="1.5"/><polyline points="6.2,12.2 9.7,7.8 13.3,6.9 15.9,20.1 21.2,8.7 27.8,22.8 33.5,14.4 38.8,17.5" fill="none" stroke="#ff3030" stroke-width="1.1"/><path d="M5.8 22 Q8 12 13.3 11 Q16 10.9 18.6 14 Q21.5 16.5 24.7 13.1 Q30 5.5 37.1 4.3" fill="none" stroke="#3a3aff" stroke-width="1.1"/><path d="M3.75 24.1 V4.5 M3.75 24.1 H37" fill="none" stroke="#111" stroke-width="0.9"/><path d="M3.75 2.3 L1.9 6.8 L5.6 6.8 Z M39.6 24.1 L35 22.2 L35 26 Z" fill="#111"/></g>
<path d="M524.8 487 L531.25 490.4 L524.8 493.7" fill="none" stroke="#222" stroke-width="1.1"/>
<text x="550.9" y="516" font-size="13" fill="#1e1e1e" stroke="#1e1e1e" stroke-width="0.16" font-family='"Liberation Serif", serif' text-anchor="middle" textLength="61.7" lengthAdjust="spacingAndGlyphs" >Положение</text>
<text x="551.6" y="529.1" font-size="13" fill="#1e1e1e" stroke="#1e1e1e" stroke-width="0.16" font-family='"Liberation Serif", serif' text-anchor="middle" textLength="56.9" lengthAdjust="spacingAndGlyphs" >золотника</text>
</svg>
</body></html>
